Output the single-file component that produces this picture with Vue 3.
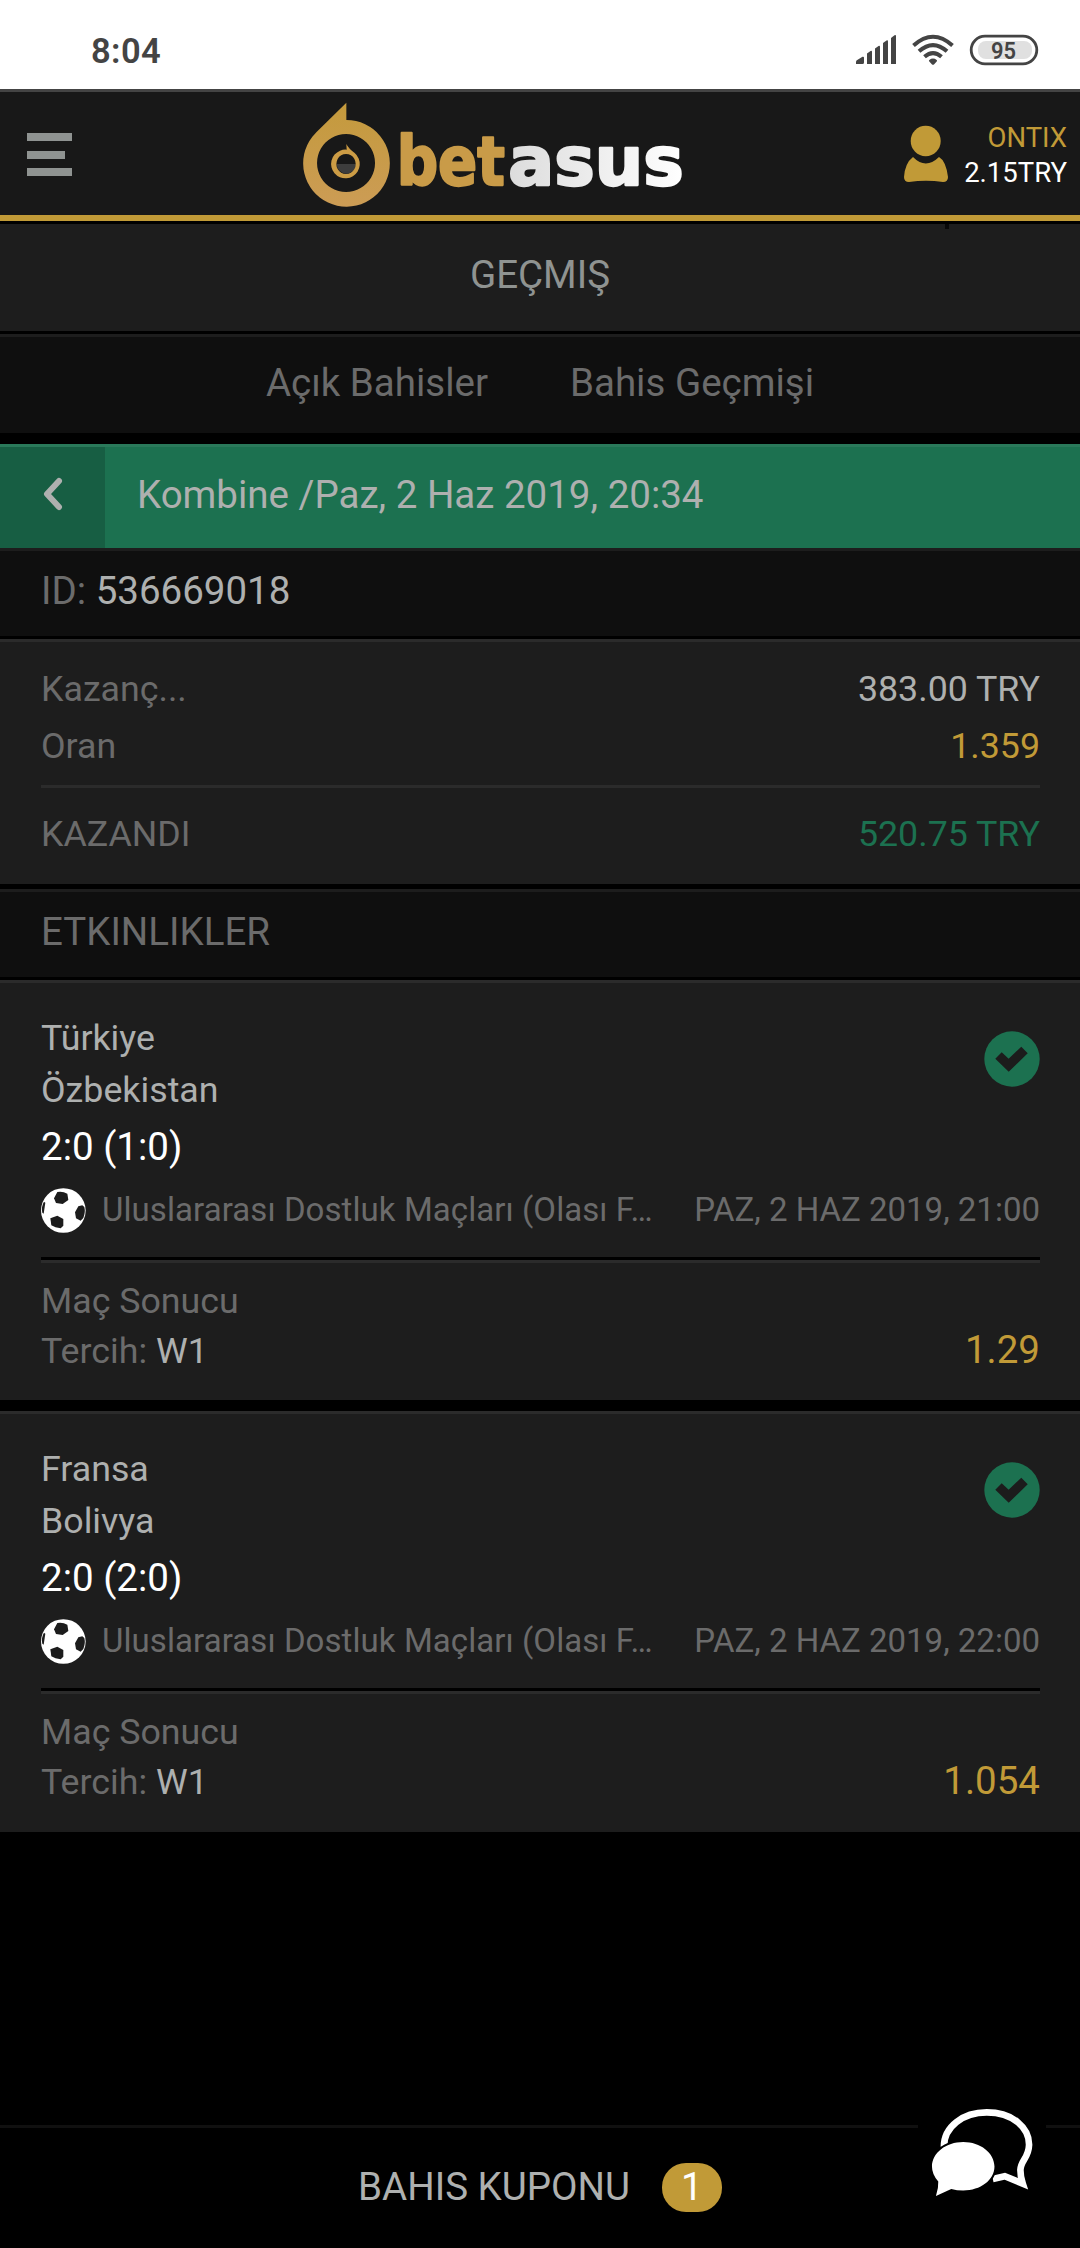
<script setup>
const tabs = ['Açık Bahisler', 'Bahis Geçmişi']
const league = 'Uluslararası Dostluk Maçları (Olası F…'
const events = [
  { home: 'Türkiye', away: 'Özbekistan', score: '2:0 (1:0)', date: 'PAZ, 2 HAZ 2019, 21:00', pick: 'W1', odds: '1.29' },
  { home: 'Fransa', away: 'Bolivya', score: '2:0 (2:0)', date: 'PAZ, 2 HAZ 2019, 22:00', pick: 'W1', odds: '1.054' },
]
</script>

<template>
  <div class="screen">
    <div class="status">
      <span class="clock">8:04</span>
      <div class="indicators">
        <svg class="phone-icons" viewBox="0 0 200 50" width="200" height="50">
          <g fill="#444">
            <path d="M6 39v-2q0-1.300 1.200-2l5.300-3.200q1.500-.6 1.500 1V37.500q0 1.500-1.500 1.500z" />
            <path d="M17 28.500l3.500-2.500q1.500-.6 1.500.8V39h-5z" />
            <path d="M25 23.500l3.500-2.500q1.500-.6 1.500.8V39h-5z" />
            <path d="M33 18l3.500-2.500q1.500-.6 1.500.8V39h-5z" />
            <path d="M41 13l3.500-2.700q1.500-.6 1.500.8V39h-5z" />
            <path d="M79.300 35q3.700-2.800 7.400 0q.8.800 0 1.600l-2.500 2.700q-1.200 1-2.400 0l-2.500-2.700q-.8-.8 0-1.600z" />
          </g>
          <g fill="none" stroke="#444" stroke-width="4">
            <path d="M63.500 20.500q19.500-17.500 39 0" />
            <path d="M69 26.300q14-12.500 28 0" />
            <path d="M74.500 31.800q8.500-7.500 17 0" />
          </g>
          <rect x="121.200" y="11.200" width="65.600" height="27.600" rx="13.800" fill="#fff" stroke="#444" stroke-width="2.800" />
          <rect x="128" y="16" width="54" height="18" rx="8" fill="#e0e0e0" />
          <text x="153.500" y="33.700" text-anchor="middle" font-family="Roboto" font-weight="600" font-size="24" textLength="25" lengthAdjust="spacingAndGlyphs" fill="#444">95</text>
        </svg>
      </div>
    </div>

    <header class="header">
      <div class="menu"><i></i><i class="short"></i><i></i></div>
      <svg class="logo" viewBox="60 30 1160 330" width="386.700" height="110">
        <defs>
          <linearGradient id="silver" x1="0" x2="1" y1="0" y2="0">
            <stop offset="0" stop-color="#dcdcdc" />
            <stop offset="1" stop-color="#ffffff" />
          </linearGradient>
          <linearGradient id="gold" x1="0" x2="0" y1="0" y2="1">
            <stop offset="0" stop-color="#c49a3c" />
            <stop offset="1" stop-color="#cc9c55" />
          </linearGradient>
        </defs>
        <path fill="url(#gold)" fill-rule="evenodd" d="M199 38V90A130 130 0 1 1 97 140Q108 127 125 111ZM198 132a87 87 0 1 0 .1 0z" />
        <path fill="#3d3d3d" d="M170 222h58a28 28 0 0 1-58 0z" />
        <path fill="#cc9c45" fill-rule="evenodd" d="M199 162q7 14 25 27a43 43 0 1 1-24-10zM198 192a29 30 0 1 0 .1 0z" />
        <g font-family="DejaVu Sans" font-weight="bold" font-size="203" stroke-width="7" stroke-linejoin="round">
          <text transform="translate(350 285) scale(.855 1)" fill="#c99b48" stroke="#c99b48">bet</text>
          <text transform="translate(685 285) scale(1.006 1)" fill="url(#silver)" stroke="url(#silver)">asus</text>
        </g>
      </svg>
      <svg class="user-icon" viewBox="0 0 44 58" width="44" height="58" fill="#c19a37">
        <ellipse cx="21.700" cy="16" rx="15" ry="15.200" />
        <path d="M9 32Q21.700 45 35 32Q42 36 44 52Q44 57 39 57Q22 54.500 5 57Q0 57 0 52Q1 38 9 32z" />
      </svg>
      <div class="account">
        <div class="name">ONTIX</div>
        <div class="balance">2.15TRY</div>
      </div>
      <i class="pointer"></i>
    </header>

    <div class="page-title">GEÇMIŞ</div>
    <nav class="tabs"><span v-for="t in tabs" :key="t">{{ t }}</span></nav>

    <div class="bet-bar">
      <div class="back">
        <svg viewBox="0 0 22 34" width="22" height="34">
          <path d="M17 4L5 17l12 13" fill="none" stroke="#aeb0af" stroke-width="6" stroke-linecap="round" stroke-linejoin="round" />
        </svg>
      </div>
      <span class="bet-title">Kombine /Paz, 2 Haz 2019, 20:34</span>
    </div>
    <div class="band id">ID: <b>536669018</b></div>

    <section class="summary">
      <div class="line"><span>Kazanç...</span><span class="light">383.00 TRY</span></div>
      <div class="line"><span>Oran</span><span class="gold">1.359</span></div>
      <hr>
      <div class="line"><span>KAZANDI</span><span class="green">520.75 TRY</span></div>
    </section>
    <div class="band">ETKINLIKLER</div>

    <section v-for="e in events" :key="e.home" class="event">
      <div class="teams">
        <div>
          <div>{{ e.home }}</div>
          <div>{{ e.away }}</div>
        </div>
        <svg class="won" viewBox="0 0 56 56" width="56" height="56">
          <circle cx="28" cy="28" r="27.700" fill="#1c7150" />
          <path d="M14.500 24.500L24.700 34.200L40.500 19" fill="none" stroke="#1c1c1c" stroke-width="9.300" stroke-linejoin="miter" />
        </svg>
      </div>
      <div class="score">{{ e.score }}</div>
      <div class="meta">
        <svg viewBox="15 18 135 135" width="45" height="45">
          <circle cx="82" cy="85.500" r="67" fill="#fff" />
          <g fill="#1c1c1c">
            <path d="M64 30Q80 27 94 35L97 54L80 66L60 63L54 49z" />
            <path d="M64 101L82 111L82 131L74 139Q57 137 46 130L43 109z" />
            <path d="M145 75Q149 90 142 108L134 116L120 109L117 91L127 73L139 70z" />
            <path d="M24 59L28 62L23 95L19 92Q15 74 24 59z" />
          </g>
        </svg>
        <span class="league">{{ league }}</span>
        <span class="date">{{ e.date }}</span>
      </div>
      <hr>
      <div class="bet">
        <div>
          <div>Maç Sonucu</div>
          <div>Tercih: <b>{{ e.pick }}</b></div>
        </div>
        <span class="odds">{{ e.odds }}</span>
      </div>
    </section>

    <footer class="coupon">
      <span>BAHIS KUPONU</span>
      <span class="badge">1</span>
    </footer>

    <div class="chat">
      <svg viewBox="115 0 385 420" width="128" height="140">
        <path d="M193 200C193 140 250 97 322 97C400 97 450 143 449 195C448 235 424 240 423 270Q423 290 430 311L376 289L340 297" fill="none" stroke="#fff" stroke-width="20" stroke-miterlimit="8" />
        <path d="M251 180C308 180 351 215 351 260C351 304 308 338 251 338C235 338 226 337 215 332L162 354Q172 330 170 307Q152 285 152 260C152 215 195 180 251 180z" fill="#000" />
        <path d="M251 186C303 186 345 219 345 260C345 301 303 332 251 332Q232 332 215 327L169 348Q177 325 176 305Q157 284 157 260C157 219 199 186 251 186z" fill="#fff" />
      </svg>
    </div>
  </div>
</template>

<style>
body { margin: 0; background: #000; }
</style>

<style scoped>
.screen { position: relative; width: 1080px; height: 2248px; display: flex; flex-direction: column; background: #000; font-family: Roboto, sans-serif; font-size: 35.75px; color: #6b6b6b; overflow: hidden; }
.screen > * { box-sizing: border-box; flex-shrink: 0; }
b { font-weight: 400; color: #aeb0af; }
hr { border: 0; margin: 0; }

.status { height: 89px; background: #fff; display: flex; justify-content: space-between; padding: 0 30px 0 91px; }
.clock { font-size: 34.500px; letter-spacing: .4px; font-weight: 600; line-height: 102px; color: #444; }
.phone-icons { display: block; margin-top: 25px; }

.header { position: relative; height: 132px; background: #181818; border-top: 3px solid #444; border-bottom: 6px solid #c19a37; display: flex; align-items: flex-start; padding-left: 27px; }
.menu { width: 45px; padding-top: 41px; display: flex; flex-direction: column; gap: 9.500px; }
.menu i { height: 8px; background: #8f9391; }
.menu .short { width: 38px; }
.logo { margin: 8px 0 0 228px; }
.user-icon { margin: 33px 0 0 217.300px; }
.account { flex: 1; padding: 28px 13px 0 0; text-align: right; font-size: 27.500px; line-height: 35px; white-space: nowrap; }
.name { color: #c19a37; }
.balance { color: #fff; }
.pointer { position: absolute; right: 131px; bottom: -14px; width: 4px; height: 5px; background: #080808; z-index: 1; }

.page-title { margin-top: 3px; height: 107px; background: #1d1d1d; color: #8f9391; text-align: center; font-size: 38.500px; line-height: 102px; }
.tabs { margin-top: 3px; height: 99px; border-top: 3px solid #1d1d1d; background: #0f0f0f; display: flex; justify-content: center; gap: 82px; font-size: 38.500px; line-height: 91px; }

.bet-bar { margin-top: 11px; height: 104px; border-top: 3px solid #2a795a; background: #1c7150; display: flex; font-size: 38.500px; }
.back { width: 105px; background: #175e43; display: flex; align-items: flex-start; justify-content: center; }
.back svg { margin-top: 30px; }
.bet-title { margin-left: 32px; line-height: 96px; color: #aeb0af; }

.band { height: 88px; border-top: 3px solid #1d1d1d; background: #0f0f0f; padding-left: 41px; font-size: 38.500px; line-height: 80px; }
.summary { margin-top: 3px; height: 245px; border-top: 3px solid #2b2b2b; background: #1d1d1d; padding: 19px 40px 0 41px; }
.summary .line { display: flex; justify-content: space-between; line-height: 57px; }
.summary hr { height: 3px; margin: 10px 0 18px; background: #2b2b2b; }
.summary + .band { margin-top: 5px; }
.light { color: #aeb0af; }
.gold { color: #c19a37; }
.green { color: #1c7150; }

.event { margin-top: 3px; height: 420px; border-top: 3px solid #2b2b2b; background: #1d1d1d; padding: 29px 40px 0 41px; }
.event + .event { margin-top: 11px; height: 421px; }
.teams { display: flex; justify-content: space-between; line-height: 52px; height: 105px; color: #aeb0af; }
.won { margin-top: 19px; }
.score { font-size: 38.500px; line-height: 60px; color: #fff; }
.meta { margin-top: 11px; display: flex; height: 45px; font-size: 33px; line-height: 43px; white-space: nowrap; }
.league { margin-left: 16px; flex: 1; letter-spacing: .07px; }
.event hr { height: 3px; margin: 24px 0 13px; background: #000; border-bottom: 3px solid #2b2b2b; }
.bet { display: flex; justify-content: space-between; align-items: flex-end; line-height: 50px; }
.odds { font-size: 38.500px; color: #c19a37; line-height: 52px; }

.coupon { margin-top: auto; height: 123px; border-top: 3px solid #101010; display: flex; justify-content: center; align-items: flex-start; gap: 32px; font-size: 38.500px; line-height: 117px; color: #aeb0af; }
.badge { width: 60px; height: 49px; margin-top: 35px; border-radius: 24px; background: #c19a37; color: #fff; line-height: 47px; text-align: center; }
.chat { position: absolute; right: 34px; top: 2080px; background: #000; width: 128px; height: 140px; }
.chat svg { display: block; }
</style>
